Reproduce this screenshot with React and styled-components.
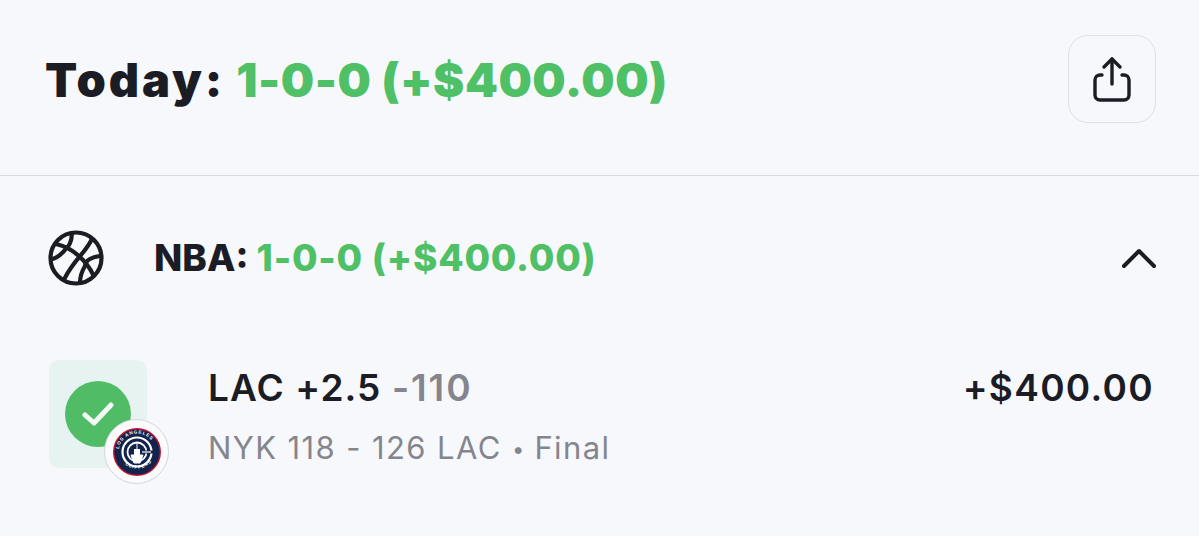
import React from "react";
import styled, { createGlobalStyle } from "styled-components";

const GlobalStyle = createGlobalStyle`
  html, body {
    margin: 0;
    padding: 0;
    background: #f7f8fc;
    overflow: hidden;
  }
  body {
    font-family: "Inter", "Liberation Sans", sans-serif;
  }
`;

const Page = styled.div`
  width: 1199px;
  height: 536px;
  background: #f7f8fc;
  color: #1b1c24;
`;

const Header = styled.header`
  height: 176px;
  box-sizing: border-box;
  padding: 35px 43px 0 45px;
  display: flex;
  justify-content: space-between;
  align-items: flex-start;
  border-bottom: 1px solid #d9dae0;
`;

const Title = styled.h1`
  display: flex;
  gap: 11px;
  margin: 10px 0 0;
  font-size: 47px;
  line-height: 70px;
  font-weight: 900;
  letter-spacing: 2.9px;
  white-space: pre;
`;

const Green = styled.span`
  color: #4fc066;
  letter-spacing: ${(p) => p.$spacing};
`;

const ShareButton = styled.button`
  width: 88px;
  height: 88px;
  padding: 0;
  display: flex;
  align-items: center;
  justify-content: center;
  background: transparent;
  border: 1px solid #dfe0e6;
  border-radius: 20px;
  color: #1b1c24;
`;

const LeagueRow = styled.section`
  display: flex;
  align-items: center;
  padding: 52px 42px 0 48px;
  height: 60px;
`;

const LeagueIcon = styled.svg`
  width: 56px;
  height: 56px;
  flex-shrink: 0;
`;

const LeagueTitle = styled.h2`
  margin: 0 0 0 50px;
  flex: 1;
  font-size: 37px;
  line-height: 50px;
  font-weight: 800;
  white-space: nowrap;
`;

const BetRow = styled.div`
  display: flex;
  align-items: flex-start;
  padding: 72px 45px 0 49px;
`;

const StatusTile = styled.div`
  position: relative;
  width: 98px;
  height: 108px;
  flex-shrink: 0;
  display: flex;
  align-items: center;
  justify-content: center;
  border-radius: 10px;
  background: #e7f3f0;
`;

const CheckCircle = styled.div`
  width: 66px;
  height: 66px;
  border-radius: 50%;
  background: #50bd66;
  display: flex;
  align-items: center;
  justify-content: center;
`;

const TeamBadge = styled.div`
  position: absolute;
  left: 55px;
  top: 59px;
  width: 65px;
  height: 65px;
  box-sizing: border-box;
  border-radius: 50%;
  background: #fbfbfd;
  border: 1px solid #d4d5db;
  display: flex;
  align-items: center;
  justify-content: center;
`;

const BetInfo = styled.div`
  flex: 1;
  margin-left: 61px;
`;

const BetLine = styled.div`
  font-size: 37px;
  line-height: 50px;
  font-weight: 600;
  letter-spacing: 1.1px;
  margin-top: 3px;
  white-space: nowrap;
`;

const Odds = styled.span`
  color: #85868d;
  letter-spacing: 1.9px;
`;

const BetMeta = styled.div`
  font-size: 31px;
  line-height: 44px;
  letter-spacing: 1.4px;
  margin-top: 13px;
  font-weight: 400;
  color: #85868d;
  white-space: nowrap;
`;

const Dot = styled.span`
  font-size: 22px;
  vertical-align: 2px;
  letter-spacing: 0;
`;

const Amount = styled.div`
  font-size: 37px;
  line-height: 50px;
  letter-spacing: 1.3px;
  margin-top: 3px;
  font-weight: 600;
  white-space: nowrap;
`;

const ClippersLogo = () => (
  <svg width="48" height="48" viewBox="0 0 48 48">
    <circle cx="24" cy="24" r="24" fill="#c8102e" />
    <circle cx="24" cy="24" r="22.6" fill="#12234e" />
    <circle cx="24" cy="24" r="14.5" fill="none" stroke="#fff" strokeWidth="2.2" />
    <circle cx="24" cy="24" r="9.5" fill="none" stroke="#fff" strokeWidth="1.8" />
    <path d="M24 15v18M18 27h12l-3 8h-6z" fill="#fff" stroke="#fff" strokeWidth="1" />
    <path d="M21 21h6v6h-6z" fill="#fff" />
    <path d="M29 24h11" stroke="#12234e" strokeWidth="3" />
    <path d="M29 24h9" stroke="#fff" strokeWidth="1.2" />
    <path id="topArc" d="M5.5 24a18.5 18.5 0 0 1 37 0" fill="none" />
    <path id="botArc" d="M7.5 31a19 19 0 0 0 33 0" fill="none" />
    <text fontFamily="Liberation Sans, sans-serif" fontSize="4.6" fontWeight="700" fill="#fff" letterSpacing="0.9">
      <textPath href="#topArc" startOffset="3">LOS ANGELES</textPath>
    </text>
    <text fontFamily="Liberation Sans, sans-serif" fontSize="4.6" fontWeight="700" fill="#fff" letterSpacing="0.9">
      <textPath href="#botArc" startOffset="7">CLIPPERS</textPath>
    </text>
  </svg>
);

export default function App() {
  return (
    <Page>
      <GlobalStyle />
      <Header>
        <Title>
          <span>Today:</span>
          <Green $spacing="0.5px">1-0-0 (+$400.00)</Green>
        </Title>
        <ShareButton aria-label="Share">
          <svg width="40" height="46" viewBox="0 0 40 46" fill="none" stroke="currentColor" strokeWidth="3.4" strokeLinecap="round" strokeLinejoin="round">
            <path d="M20 28V3" />
            <path d="M12 11l8-8 8 8" />
            <path d="M10 19H8a5 5 0 0 0-5 5v15a5 5 0 0 0 5 5h24a5 5 0 0 0 5-5V24a5 5 0 0 0-5-5h-2" />
          </svg>
        </ShareButton>
      </Header>
      <LeagueRow>
        <LeagueIcon viewBox="0 0 56 56" fill="none" stroke="#1b1c24" strokeWidth="4.2" strokeLinecap="round">
          <circle cx="28" cy="28" r="25.5" />
          <path d="M43.7 9.3C38 22 26 30 17 47.7" />
          <path d="M8.7 14.3C16 16 24 20 30 25.3C37 31 42 38 45.5 45.5" />
          <path d="M23.7 4.3C24 12 20 17 18.7 17.7C14 24 9 28 3.7 29.3" />
          <path d="M52 26C45 27 37 30 37 36C34 41 32 47 32 52.7" />
        </LeagueIcon>
        <LeagueTitle>
          NBA: <Green $spacing="0.8px">1-0-0 (+$400.00)</Green>
        </LeagueTitle>
        <svg width="36" height="22" viewBox="0 0 36 22" fill="none" stroke="#1b1c24" strokeWidth="4" strokeLinecap="round" strokeLinejoin="round">
          <path d="M3 19L18 4l15 15" />
        </svg>
      </LeagueRow>
      <BetRow>
        <StatusTile>
          <CheckCircle>
            <svg width="32" height="26" viewBox="0 0 32 26" fill="none" stroke="#f4faf5" strokeWidth="5" strokeLinecap="round" strokeLinejoin="round">
              <path d="M3 14l9 8L29 4" />
            </svg>
          </CheckCircle>
          <TeamBadge>
            <ClippersLogo />
          </TeamBadge>
        </StatusTile>
        <BetInfo>
          <BetLine>
            LAC +2.5 <Odds>-110</Odds>
          </BetLine>
          <BetMeta>
            NYK 118 - 126 LAC <Dot>•</Dot> Final
          </BetMeta>
        </BetInfo>
        <Amount>+$400.00</Amount>
      </BetRow>
    </Page>
  );
}
